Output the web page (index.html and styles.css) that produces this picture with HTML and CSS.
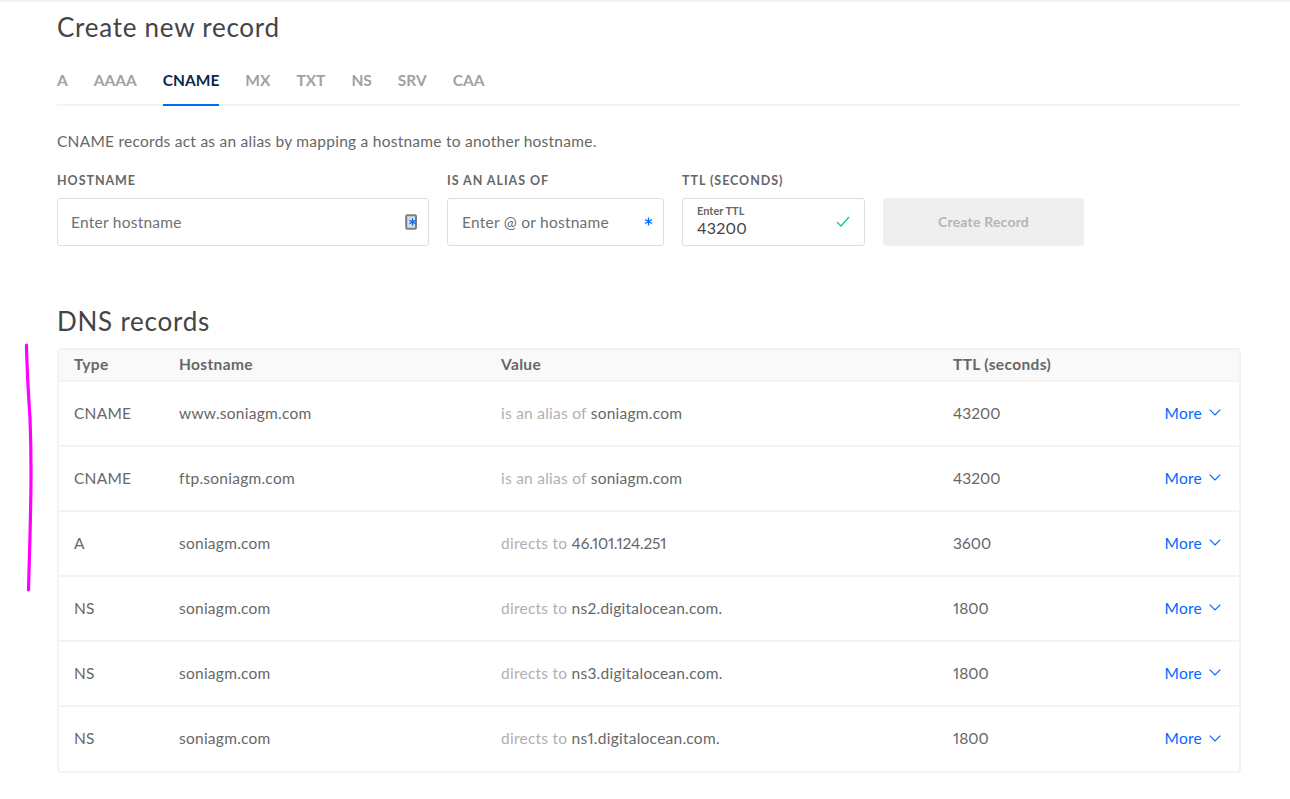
FILE: index.html
```html
<!DOCTYPE html>
<html lang="en">
<head>
<meta charset="utf-8">
<title>DNS records</title>
<link rel="stylesheet" href="styles.css">
</head>
<body>
<div class="topbar"></div>
<svg class="scribble" width="12" height="252" viewBox="0 0 12 252" fill="none"><path d="M2.500 2 C3 30 5 60 6 75 C7 100 7.500 130 6.500 170 C6 200 5 225 4.500 247" stroke="#ff00ff" stroke-width="3.200" stroke-linecap="round"/></svg>
<main class="page">
  <h2 class="title">Create new record</h2>
  <nav class="tabs">
    <a class="tab">A</a><a class="tab">AAAA</a><a class="tab active">CNAME</a><a class="tab">MX</a><a class="tab">TXT</a><a class="tab">NS</a><a class="tab">SRV</a><a class="tab">CAA</a>
  </nav>
  <p class="desc">CNAME records act as an alias by mapping a hostname to another hostname.</p>
  <form class="form">
    <div class="field f-host">
      <label class="label">HOSTNAME</label>
      <div class="input"><span class="ph">Enter hostname</span>
        <svg class="keyicon" width="13" height="16" viewBox="0 0 13 16"><rect x="1.200" y="1.200" width="9.800" height="13.600" rx="1" fill="#d9dde4" stroke="#7c7e81" stroke-width="2"/><path d="M7.500 4.500v7M4.400 6.200l6.200 3.600M10.600 6.200l-6.200 3.600" stroke="#0069ff" stroke-width="1.300"/></svg>
      </div>
    </div>
    <div class="field f-alias">
      <label class="label">IS AN ALIAS OF</label>
      <div class="input"><span class="ph">Enter @ or hostname</span>
        <svg class="req" width="9" height="9" viewBox="0 0 9 9"><path d="M4.500 .5v8M1 2.500l7 4M8 2.500l-7 4" stroke="#0069ff" stroke-width="1.300"/></svg>
      </div>
    </div>
    <div class="field f-ttl">
      <label class="label">TTL (SECONDS)</label>
      <div class="input ttl">
        <div class="ttl-text"><span class="mini">Enter TTL</span><span class="val">43200</span></div>
        <svg class="check" width="14" height="11" viewBox="0 0 14 11" fill="none"><path d="M1 6l4 4 8-9" stroke="#15cd72" stroke-width="1.300"/></svg>
      </div>
    </div>
    <button type="button" class="btn">Create Record</button>
  </form>
  <h2 class="title dns">DNS records</h2>
  <div class="table">
    <div class="row head"><span>Type</span><span>Hostname</span><span>Value</span><span>TTL (seconds)</span><span></span></div>
    <div class="row"><span>CNAME</span><span>www.soniagm.com</span><span><i>is an alias of</i> soniagm.com</span><span class="num">43200</span><a class="more">More <svg width="12" height="7" viewBox="0 0 12 7" fill="none"><path d="M.7.7l5.300 5.300 5.300-5.300" stroke="#0069ff" stroke-width="1.200"/></svg></a></div>
    <div class="row"><span>CNAME</span><span>ftp.soniagm.com</span><span><i>is an alias of</i> soniagm.com</span><span class="num">43200</span><a class="more">More <svg width="12" height="7" viewBox="0 0 12 7" fill="none"><path d="M.7.7l5.300 5.300 5.300-5.300" stroke="#0069ff" stroke-width="1.200"/></svg></a></div>
    <div class="row"><span>A</span><span>soniagm.com</span><span><i>directs to</i> <b class="ip">46.101.124.251</b></span><span class="num">3600</span><a class="more">More <svg width="12" height="7" viewBox="0 0 12 7" fill="none"><path d="M.7.7l5.300 5.300 5.300-5.300" stroke="#0069ff" stroke-width="1.200"/></svg></a></div>
    <div class="row"><span>NS</span><span>soniagm.com</span><span><i>directs to</i> ns2.digitalocean.com.</span><span class="num">1800</span><a class="more">More <svg width="12" height="7" viewBox="0 0 12 7" fill="none"><path d="M.7.7l5.300 5.300 5.300-5.300" stroke="#0069ff" stroke-width="1.200"/></svg></a></div>
    <div class="row"><span>NS</span><span>soniagm.com</span><span><i>directs to</i> ns3.digitalocean.com.</span><span class="num">1800</span><a class="more">More <svg width="12" height="7" viewBox="0 0 12 7" fill="none"><path d="M.7.7l5.300 5.300 5.300-5.300" stroke="#0069ff" stroke-width="1.200"/></svg></a></div>
    <div class="row last"><span>NS</span><span>soniagm.com</span><span><i>directs to</i> ns1.digitalocean.com.</span><span class="num">1800</span><a class="more">More <svg width="12" height="7" viewBox="0 0 12 7" fill="none"><path d="M.7.7l5.300 5.300 5.300-5.300" stroke="#0069ff" stroke-width="1.200"/></svg></a></div>
  </div>
</main>
</body>
</html>
```
FILE: styles.css
```css
* { box-sizing: border-box; }
html, body { margin: 0; height: 799px; overflow: hidden; background: #fff; }
body { font-family: Lato, "Open Sans", sans-serif; color: #676767; position: relative; font-feature-settings: "pnum" 1; font-variant-numeric: proportional-nums; }
.topbar { height: 2px; background: #f3f3f3; }
.scribble { position: absolute; left: 24px; top: 343px; }
.page { width: 1184px; margin-left: 57px; }
.title { margin: 0; height: 50px; font-size: 26px; line-height: 50px; font-weight: 400; color: #444; letter-spacing: .75px; }
.tabs { display: flex; gap: 26px; margin-top: 13px; height: 41px; border-bottom: 2px solid #f3f3f3; }
.tab { height: 41px; padding-top: 4px; font-size: 15.500px; line-height: 22px; font-weight: 700; color: #a1a1a1; }
.tab.active { color: #0b2a4a; border-bottom: 2px solid #0069ff; }
.desc { margin: 24px 0 0; font-size: 15.500px; line-height: 22px; height: 22px; color: #676767; letter-spacing: .25px; }
.form { display: flex; gap: 18px; margin-top: 21px; align-items: flex-end; }
.field { display: flex; flex-direction: column; }
.f-host { width: 372px; }
.f-alias { width: 217px; }
.f-alias .input { padding: 0 10px 1px 14px; }
.f-ttl { width: 183px; }
.label { font-size: 12.500px; line-height: 16px; height: 16px; margin-bottom: 9px; font-weight: 700; letter-spacing: .95px; color: #676767; }
.input { height: 48px; border: 1px solid #dedede; border-radius: 3px; display: flex; align-items: center; justify-content: space-between; padding: 0 10px 1px 13px; background: #fff; }
.ph { font-size: 15.500px; color: #707070; letter-spacing: .25px; }
.req { margin-right: 0; }
.f-ttl .ttl { padding: 0 14px 2px 14px; }
.ttl-text { display: flex; flex-direction: column; }
.mini { font-size: 11px; line-height: 12px; font-weight: 700; color: #676767; }
.val { font-size: 16px; line-height: 19px; margin-top: 1px; color: #444; letter-spacing: .2px; }
.check { margin-top: 1px; }
.btn { width: 201px; height: 48px; border: 0; border-radius: 3px; background: #efefef; color: #b5b5b5; font: 700 14px Lato, sans-serif; letter-spacing: .2px; padding: 0 0 1px; }
.dns { margin-top: 50px; }
.table { margin-top: 2px; border: 2px solid #f3f3f3; border-radius: 4px; }
.row { display: grid; grid-template-columns: 105px 322px 452px 200px 1fr; align-items: center; height: 65px; padding: 0 18px 0 15px; border-bottom: 2px solid #f3f3f3; font-size: 15.500px; color: #676767; letter-spacing: .25px; }
.row.head { height: 32px; background: #f9f9f9; font-weight: 700; letter-spacing: .35px; }
.row > span, .more { position: relative; top: -1px; }
.row.last { border-bottom: 0; height: 64px; }
.row i { font-style: normal; color: #b0b0b0; }
.row .num { letter-spacing: 0; }
.row .ip { font-weight: 400; letter-spacing: -.2px; }
.more { display: flex; align-items: center; justify-content: flex-end; gap: 7px; color: #0069ff; }
```
